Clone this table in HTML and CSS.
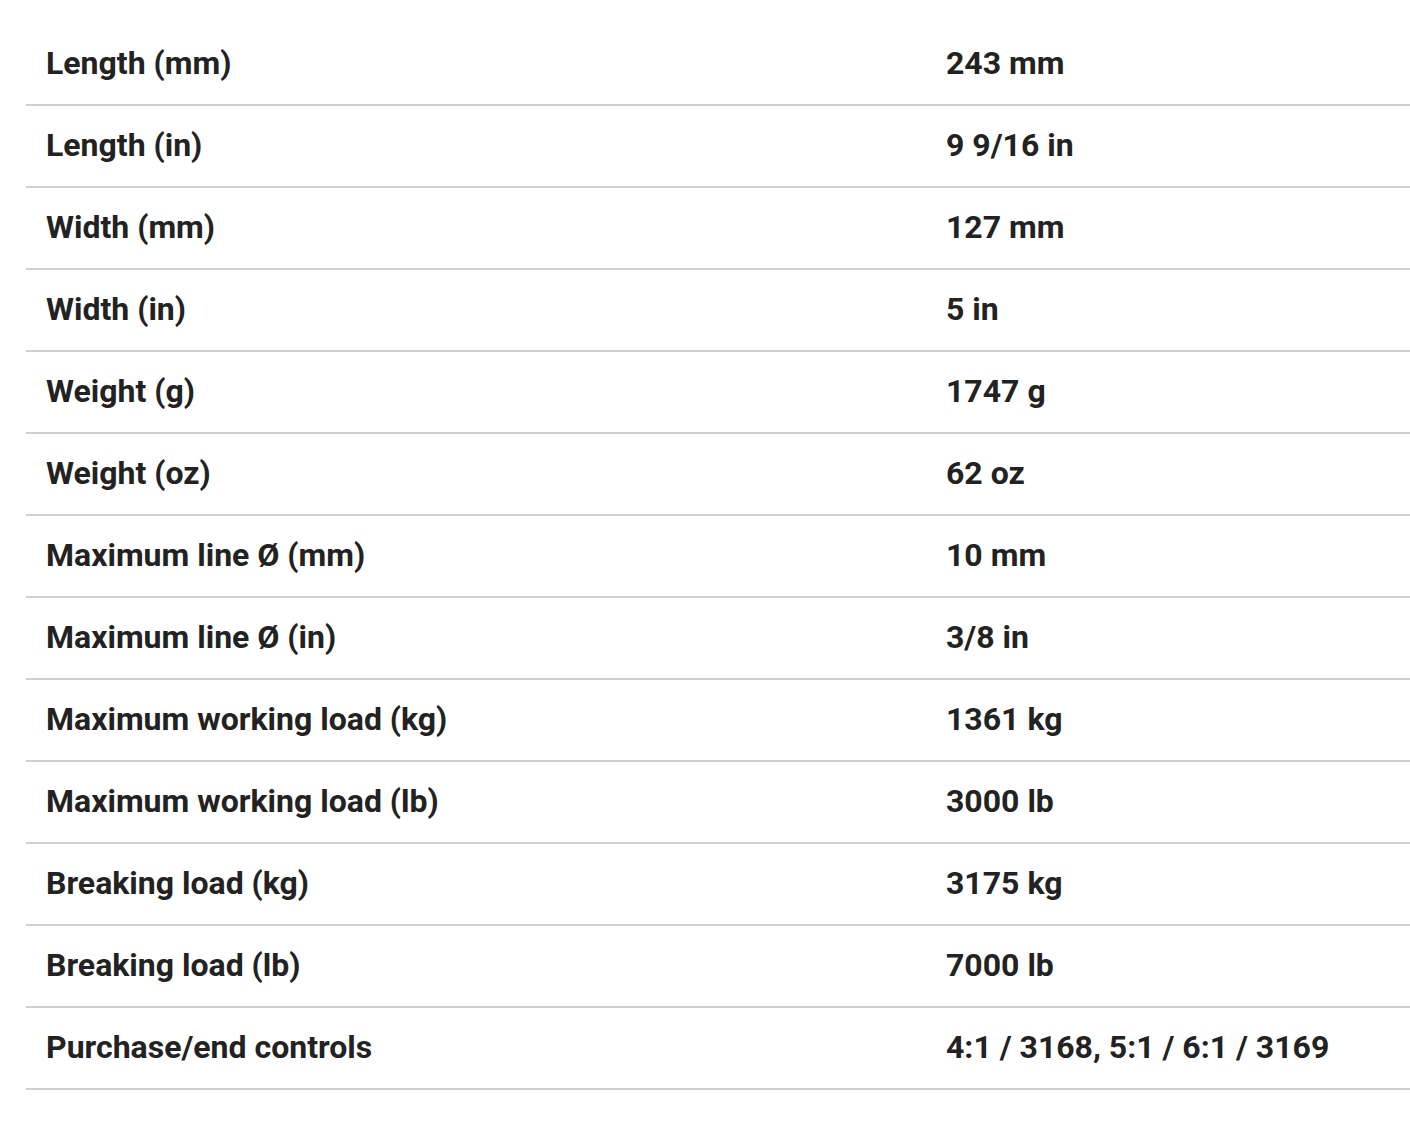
FILE: index.html
```html
<!DOCTYPE html>
<html>
<head>
<meta charset="utf-8">
<link rel="stylesheet" href="styles.css">
</head>
<body>
<div class="wrap">
<table class="specs">
<tbody>
<tr><td class="label">Length (mm)</td><td class="value">243 mm</td></tr>
<tr><td class="label">Length (in)</td><td class="value">9 9/16 in</td></tr>
<tr><td class="label">Width (mm)</td><td class="value">127 mm</td></tr>
<tr><td class="label">Width (in)</td><td class="value">5 in</td></tr>
<tr><td class="label">Weight (g)</td><td class="value">1747 g</td></tr>
<tr><td class="label">Weight (oz)</td><td class="value">62 oz</td></tr>
<tr><td class="label">Maximum line Ø (mm)</td><td class="value">10 mm</td></tr>
<tr><td class="label">Maximum line Ø (in)</td><td class="value">3/8 in</td></tr>
<tr><td class="label">Maximum working load (kg)</td><td class="value">1361 kg</td></tr>
<tr><td class="label">Maximum working load (lb)</td><td class="value">3000 lb</td></tr>
<tr><td class="label">Breaking load (kg)</td><td class="value">3175 kg</td></tr>
<tr><td class="label">Breaking load (lb)</td><td class="value">7000 lb</td></tr>
<tr><td class="label">Purchase/end controls</td><td class="value">4:1 / 3168, 5:1 / 6:1 / 3169</td></tr>
</tbody>
</table>
</div>
</body>
</html>
```
FILE: styles.css
```css
html, body {
  margin: 0;
  padding: 0;
  background: #fff;
}
.wrap {
  padding: 24px 0 0 26px;
}
.specs {
  width: 1384px;
  border-collapse: separate;
  border-spacing: 0;
  font-family: Roboto, "Liberation Sans", sans-serif;
  font-weight: 700;
  font-size: 32px;
  color: #222;
}
.specs td {
  height: 78px;
  padding: 0 0 2px 20px;
  border-bottom: 2px solid #cfcfcf;
  vertical-align: middle;
  box-sizing: content-box;
  white-space: nowrap;
}
.specs td.label {
  width: 880px;
}
```
